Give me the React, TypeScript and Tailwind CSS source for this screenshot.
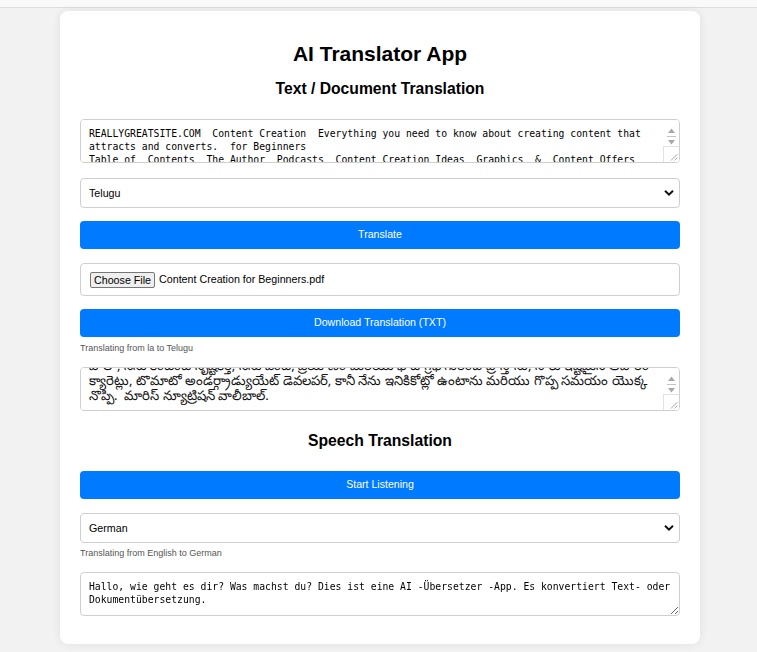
import { useEffect, useRef } from "react";

const SOURCE_TEXT =
  "REALLYGREATSITE.COM  Content Creation  Everything you need to know about creating content that attracts and converts.  for Beginners\n" +
  "Table of  Contents  The Author  Podcasts  Content Creation Ideas  Graphics  &  Content Offers\n" +
  "Social Media  Email Marketing  Conclusion  The Author  Hello, I'm a content creator.";

const TELUGU_TEXT =
  "రియల్లీగ్రేట్‌సైట్.కామ్ కంటెంట్ సృష్టి ప్రారంభకులకు కంటెంట్‌ను సృష్టించడం గురించి మీరు తెలుసుకోవలసిన ప్రతిదీ.\n" +
  "హలో, నేను కంటెంట్ సృష్టికర్త, నేను వంట, ప్రయాణం మరియు ఫోటోగ్రఫీ గురించి వ్రాస్తాను, నాకు ఇష్టమైన ఆహారం\n" +
  "క్యారెట్లు, టొమాటో అండర్గ్రాడ్యుయేట్ డెవలపర్, కానీ నేను ఇనికికోట్లో ఉంటాను మరియు గొప్ప సమయం యొక్క " +
  "నొప్పి.  మారిస్ న్యూట్రిషన్ వాలీబాల్.";

const GERMAN_TEXT =
  "Hallo, wie geht es dir? Was machst du? Dies ist eine AI -Übersetzer -App. Es konvertiert Text- oder Dokumentübersetzung.";

const MONO = '"DejaVu Sans Mono", "Liberation Mono", monospace';
const TELUGU_FONT = '"Noto Sans", "Liberation Sans", sans-serif';

function Chevron() {
  return (
    <svg width="10" height="7" viewBox="0 0 10 7" className="pointer-events-none absolute right-[6px] top-1/2 -translate-y-1/2">
      <path d="M1 1.2 L5 5.2 L9 1.2" fill="none" stroke="#111" strokeWidth="2" />
    </svg>
  );
}

function LangSelect({ value }: { value: string }) {
  return (
    <div className="relative">
      <select
        defaultValue={value}
        className="block h-[30px] w-full appearance-none rounded-[4px] border border-[#cfcfcf] bg-white pl-[8px] text-[10.7px] text-black outline-none"
        style={{ fontFamily: '"Liberation Sans", Arial, sans-serif' }}
      >
        <option>English</option>
        <option>German</option>
        <option>Telugu</option>
        <option>Hindi</option>
        <option>French</option>
      </select>
      <Chevron />
    </div>
  );
}

function BlueButton({ label }: { label: string }) {
  return (
    <button className="block h-[28px] w-full rounded-[4px] bg-[#007bff] text-[10.6px] text-white">
      {label}
    </button>
  );
}

// the browser hides scrollbars, so the classic one is drawn over the box
function FakeScrollbar() {
  return (
    <div className="pointer-events-none absolute bottom-[1px] right-[1px] top-[1px] flex w-[16px] flex-col items-center rounded-r-[3px] bg-white">
      <div className="flex h-[13px] items-end">
        <svg width="7" height="5" viewBox="0 0 7 5">
          <path d="M0 5 L3.5 0.5 L7 5 Z" fill="#a8a8a8" />
        </svg>
      </div>
      <div className="mt-[3px] h-[1px] w-[9px] bg-[#c4c4c4]" />
      <div className="mt-[3px]">
        <svg width="7" height="5" viewBox="0 0 7 5">
          <path d="M0 0 L3.5 4.5 L7 0 Z" fill="#a8a8a8" />
        </svg>
      </div>
      <div className="flex-1" />
      <div className="flex h-[16px] w-full items-end justify-end border-l border-t border-[#e2e2e2] pb-[1px] pr-[1px]">
        <svg width="8" height="8" viewBox="0 0 8 8">
          <path d="M1 7.5 L7.5 1 M4.5 7.5 L7.5 4.5" stroke="#9a9a9a" strokeWidth="0.9" />
        </svg>
      </div>
    </div>
  );
}

function Area({
  text,
  scrollEnd,
  bar,
  telugu,
}: {
  text: string;
  scrollEnd?: boolean;
  bar?: boolean;
  telugu?: boolean;
}) {
  const ref = useRef<HTMLTextAreaElement>(null);
  useEffect(() => {
    if (scrollEnd && ref.current) ref.current.scrollTop = ref.current.scrollHeight;
  }, [scrollEnd]);
  return (
    <div className="relative">
      <textarea
        ref={ref}
        readOnly
        value={text}
        className={
          telugu
            ? "block h-[44px] w-full rounded-[4px] border border-[#cfcfcf] bg-white pl-[8px] pr-[25px] py-[7px] text-[13.2px] leading-[15px] text-[#111] outline-none"
            : bar
              ? "block h-[44px] w-full rounded-[4px] border border-[#cfcfcf] bg-white pl-[8px] pr-[25px] py-[7px] text-[9.75px] leading-[13px] text-black outline-none"
              : "block h-[44px] w-full rounded-[4px] border border-[#cfcfcf] bg-white px-[8px] py-[7px] text-[9.75px] leading-[13px] text-black outline-none"
        }
        style={{ fontFamily: telugu ? TELUGU_FONT : MONO }}
      />
      {bar && <FakeScrollbar />}
    </div>
  );
}

export default function App() {
  return (
    <div
      className="min-h-[652px] bg-[#f2f2f2] text-black"
      style={{ fontFamily: '"Liberation Sans", Arial, sans-serif' }}
    >
      <div className="h-[8px] border-b border-[#dedede] bg-[#fafafa]" />
      <div className="h-[3px]" />
      <main className="ml-[60px] w-[640px] rounded-[8px] bg-white px-[20px] pb-[28px] pt-[31px] shadow-[0_0_10px_rgba(0,0,0,0.08)]">
        <h1 className="text-center text-[21px] font-bold leading-[24px]">AI Translator App</h1>
        <h2 className="mt-[13px] text-center text-[15.7px] font-bold leading-[20px]">Text / Document Translation</h2>

        <div className="mt-[20px]">
          <Area text={SOURCE_TEXT} bar />
        </div>
        <div className="mt-[15px]">
          <LangSelect value="Telugu" />
        </div>
        <div className="mt-[13px]">
          <BlueButton label="Translate" />
        </div>

        <div className="mt-[14px] flex h-[33px] items-center rounded-[4px] border border-[#cfcfcf] px-[9px] text-[10.7px]">
          <span className="rounded-[2px] border border-[#767676] bg-[#efefef] px-[3px] leading-[14px]">Choose File</span>
          <span className="ml-[4px]">Content Creation for Beginners.pdf</span>
        </div>

        <div className="mt-[13px]">
          <BlueButton label="Download Translation (TXT)" />
        </div>
        <p className="mt-[5px] text-[9px] leading-[12px] text-[#555]">Translating from la to Telugu</p>
        <div className="mt-[13px]">
          <Area text={TELUGU_TEXT} scrollEnd bar telugu />
        </div>

        <h2 className="mt-[20px] text-center text-[15.7px] font-bold leading-[20px]">Speech Translation</h2>
        <div className="mt-[20px]">
          <BlueButton label="Start Listening" />
        </div>
        <div className="mt-[14px]">
          <LangSelect value="German" />
        </div>
        <p className="mt-[4px] text-[9px] leading-[12px] text-[#555]">Translating from English to German</p>
        <div className="mt-[13px]">
          <Area text={GERMAN_TEXT} />
        </div>
      </main>
    </div>
  );
}
